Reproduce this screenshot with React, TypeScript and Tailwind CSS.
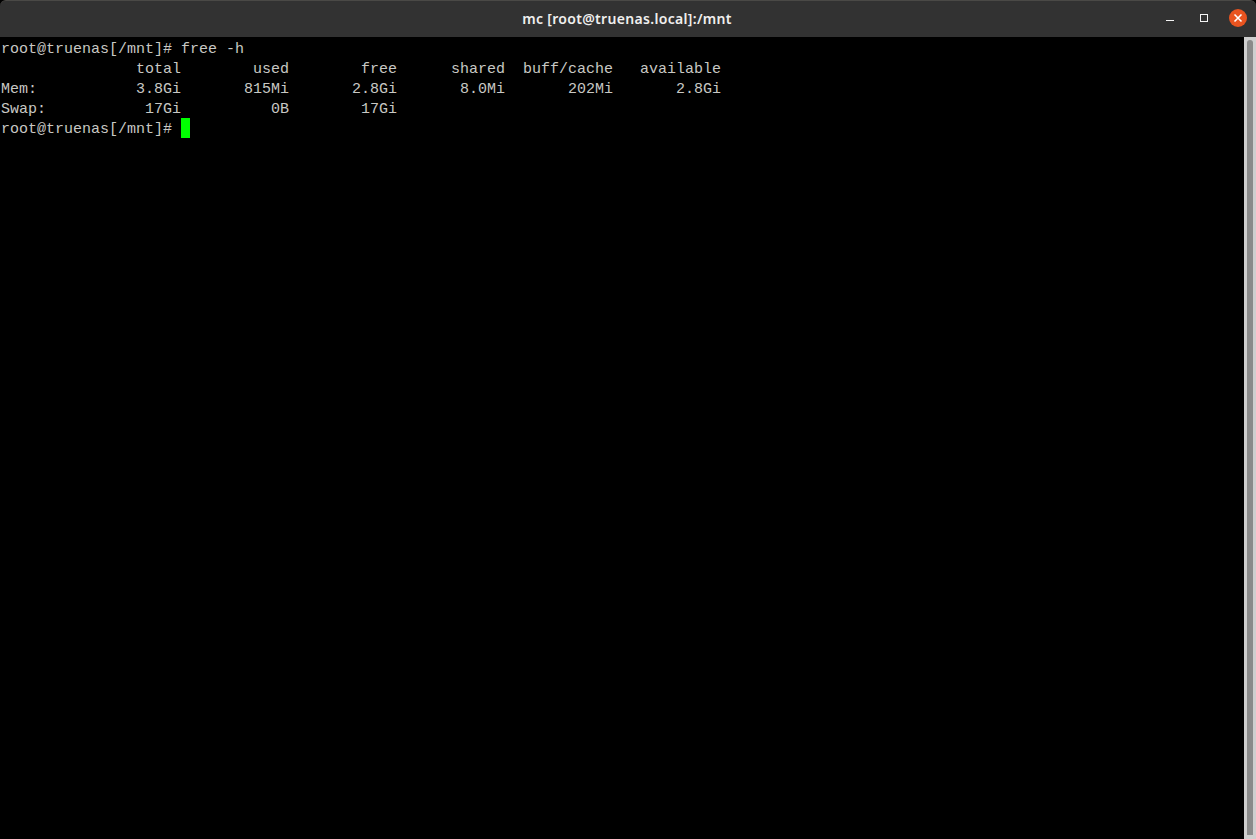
import React from "react";

const lines = [
  "root@truenas[/mnt]# free -h",
  "               total        used        free      shared  buff/cache   available",
  "Mem:           3.8Gi       815Mi       2.8Gi       8.0Mi       202Mi       2.8Gi",
  "Swap:           17Gi          0B        17Gi",
];

export default function App() {
  return (
    <div className="flex h-[839px] w-[1256px] flex-col overflow-hidden bg-black">
      <header className="flex h-[37px] shrink-0 items-center rounded-t-[6px] border-t border-[#4a4946] bg-[#323232] pb-[2px] pr-[9px]">
        <div className="w-[105px]" />
        <div className="flex-1 pl-[7px] text-center font-['Noto_Sans',sans-serif] text-[14px] font-semibold tracking-[0.32px] text-[#f0efee]">
          mc [root@truenas.local]:/mnt
        </div>
        <div className="flex w-[105px] items-center justify-end">
          <svg width="12" height="12" viewBox="0 0 12 12" className="mr-[22px]">
            <rect x="1" y="8" width="8" height="1" fill="#f4f4f4" />
          </svg>
          <svg width="10" height="10" viewBox="0 0 10 10" className="mr-[20px]">
            <rect x="1.5" y="1.5" width="7" height="7" fill="none" stroke="#f4f4f4" strokeWidth="1" />
          </svg>
          <svg width="18" height="18" viewBox="0 0 18 18">
            <circle cx="9" cy="9" r="9" fill="#e95420" />
            <path d="M5.5 5.5l7 7M12.5 5.5l-7 7" stroke="#fff" strokeWidth="1.6" />
          </svg>
        </div>
      </header>
      <div className="flex min-h-0 flex-1">
        <main className="flex-1 pl-[1px] pt-[1px] font-['Liberation_Mono',monospace] text-[15px] leading-[20px] text-[#c8c8c4]">
          {lines.map((l) => (
            <div key={l} className="h-[20px] whitespace-pre pt-[2px]">
              {l}
            </div>
          ))}
          <div className="flex h-[20px] whitespace-pre">
            <span className="pt-[2px]">root@truenas[/mnt]# </span>
            <span className="h-[20px] w-[9px] bg-[#00ff00]" />
          </div>
        </main>
        <aside className="w-[12px] shrink-0 bg-[#cfcfcf] px-[3px]">
          <div className="mt-[3px] h-[795px] rounded-t-[3px] bg-[#8a8a8a]" />
        </aside>
      </div>
    </div>
  );
}
